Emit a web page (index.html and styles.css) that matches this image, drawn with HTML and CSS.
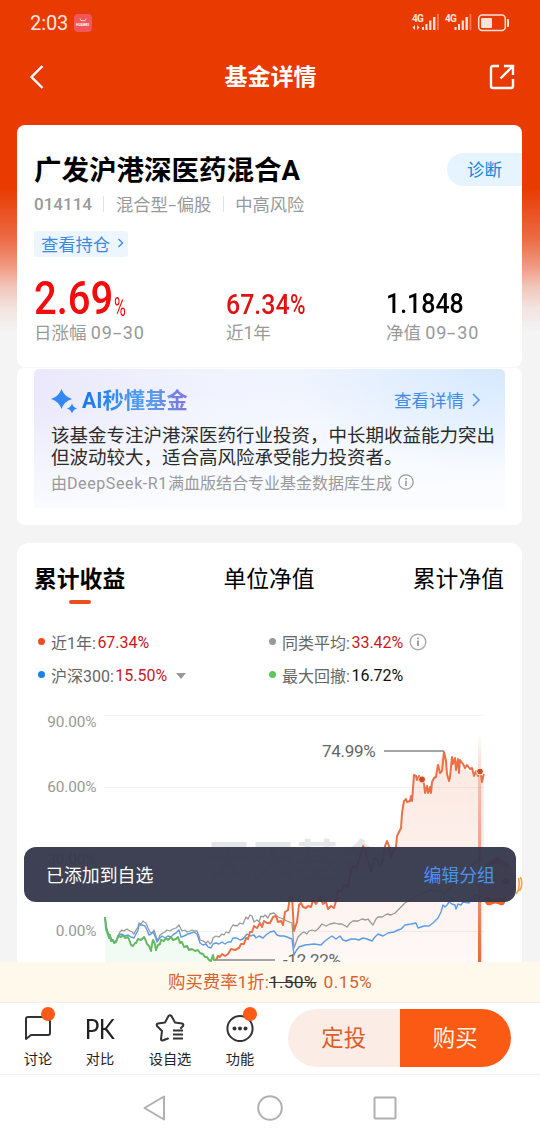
FILE: index.html
```html
<!DOCTYPE html>
<html lang="zh-CN">
<head>
    <meta charset="UTF-8">
    <title>基金详情</title>
    <link rel="stylesheet" href="styles.css">
</head>
<body>
<div class="page">
    <div class="status-bar">
        <span class="time">2:03</span>
        <span class="app-badge">
            <svg width="18" height="18" viewBox="0 0 18 18"><path d="M6 4.5a3 2.4 0 0 0 6 0" fill="none" stroke="#fbd0c8" stroke-width="1"/></svg>
            <b>HUAWEI</b>
        </span>
        <svg class="signals" width="100" height="20" viewBox="410 13 100 20">
            <g fill="#ffe3da">
                <text class="net" x="412" y="22">4G</text>
                <path d="M412.500 27.500l2.500-2.500v5zM419.500 27.500l-2.500-2.500v5z"/>
                <path d="M422 27h2v3h-2zM425.500 24h2v6h-2zM429.200 20.500h2.200v9.500h-2.200zM433 17h2.400v13H433z"/>
                <path d="M437 14h1.800v16H437z" opacity=".4"/>
                <text class="net" x="445" y="22">4G</text>
                <path d="M454.500 27h2v3h-2zM458 24h2v6h-2zM461.700 20.500h2.200v9.500h-2.200zM465.500 17h2.400v13h-2.400z"/>
                <path d="M469.500 14h1.800v16h-1.800z" opacity=".4"/>
                <rect x="481" y="18" width="11" height="10" rx="1"/>
                <path d="M507 19h1a1 1 0 0 1 1 1v6a1 1 0 0 1-1 1h-1z"/>
            </g>
            <rect x="478.700" y="15" width="26.600" height="15.500" rx="3.500" fill="none" stroke="#ffe3da" stroke-width="1.500"/>
        </svg>
    </div>
    <div class="nav-bar">
        <svg width="24" height="28" viewBox="0 0 24 28"><path d="M13.500 3L2.500 14l11 11" fill="none" stroke="#fff" stroke-width="2.400"/></svg>
        <h1>基金详情</h1>
        <svg width="26" height="26" viewBox="0 0 26 26" fill="none" stroke="#fff" stroke-width="2.400"><path d="M10 2H4Q2 2 2 4v18q0 2 2 2h18q2 0 2-2v-7M11.500 14.500L23 3M15 2h9v9"/></svg>
    </div>

    <div class="content">
        <div class="card fund">
            <div class="fund-title">
                <h2>广发沪港深医药混合A</h2>
                <a class="diagnose">诊断</a>
            </div>
            <div class="fund-meta"><b>014114</b><i></i><span>混合型<em>-</em>偏股</span><i></i><span>中高风险</span></div>
            <a class="holding">查看持仓
                <svg width="7" height="10" viewBox="0 0 7 10"><path d="M1.500 1l4 4-4 4" fill="none" stroke="#3f8ae0" stroke-width="1.300"/></svg>
            </a>
            <div class="stats">
                <div class="stat"><p class="value big"><span>2.69</span><small>%</small></p><p class="label">日涨幅 <span>09<em>-</em>30</span></p></div>
                <div class="stat"><p class="value red"><span>67.34</span><em>%</em></p><p class="label">近1年</p></div>
                <div class="stat"><p class="value"><span>1.1848</span></p><p class="label">净值 <span>09<em>-</em>30</span></p></div>
            </div>
        </div>

        <div class="card ai">
            <div class="ai-box">
                <div class="ai-head">
                    <svg width="27" height="27" viewBox="0 0 27 27" fill="#3388f5"><path d="M10.500 1Q13 8.500 21 11 13 13.500 10.500 21 8 13.500 0 11 8 8.500 10.500 1zM21 15.500q1.300 3.800 5 5-3.700 1.200-5 5-1.300-3.800-5-5 3.700-1.200 5-5z"/></svg>
                    <strong>AI秒懂基金</strong>
                    <a>查看详情</a>
                    <svg width="10" height="14" viewBox="0 0 10 14"><path d="M2 1l6 6-6 6" fill="none" stroke="#4d94ea" stroke-width="1.500"/></svg>
                </div>
                <p class="ai-text">该基金专注沪港深医药行业投资，中长期收益能力突出<br>但波动较大，适合高风险承受能力投资者。</p>
                <p class="ai-note"><span>由<b>DeepSeek-R1</b>满血版结合专业基金数据库生成</span>
                    <svg width="16" height="16" viewBox="0 0 16 16"><circle cx="8" cy="8" r="7.200" fill="none" stroke="#999" stroke-width="1.200"/><path d="M7.200 4h1.700v1.600H7.200zM7.200 6.800h1.600V12H7.200z" fill="#999"/></svg>
                </p>
            </div>
        </div>

        <div class="card trend">
            <div class="tabs"><span class="active">累计收益</span><span>单位净值</span><span>累计净值</span></div>
            <div class="legend">
                <div><i class="dot orange"></i>近1年:<b class="up">67.34%</b></div>
                <div><i class="dot grey"></i>同类平均:<b class="up">33.42%</b>
                    <svg class="info" width="18" height="18" viewBox="0 0 18 18"><circle cx="9" cy="9" r="7.800" fill="none" stroke="#aaa" stroke-width="1.400"/><path d="M8.100 4.500h1.800v1.800H8.100zM8.100 7.500h1.800V13H8.100z" fill="#999"/></svg>
                </div>
                <div><i class="dot blue"></i>沪深300:<b class="up">15.50%</b><i class="caret"></i></div>
                <div><i class="dot green"></i>最大回撤:<b>16.72%</b></div>
            </div>
            <svg class="chart" width="505" height="262" viewBox="17 700 505 262">
                <defs>
                    <linearGradient id="area" x1="0" y1="0" x2="0" y2="1"><stop offset="0" stop-color="#fce8e1"/><stop offset="1" stop-color="#fef8f6"/></linearGradient>
                    <linearGradient id="cursor" x1="0" y1="0" x2="0" y2="1"><stop offset="0" stop-color="#e57650" stop-opacity="0"/><stop offset=".2" stop-color="#e57650" stop-opacity=".35"/><stop offset=".75" stop-color="#e57650" stop-opacity=".85"/><stop offset="1" stop-color="#e46a41"/></linearGradient>
                </defs>
                <text class="watermark" x="207" y="877">天天基金</text>
                <!-- 收益区域 -->
                <path fill="url(#area)" d="M216 962L231 950 243 943 252 931 267 923 276 916 283 924 288 910 292 896 294 931 300 903 313 902 329 909 338 890 353 867 363 846 371 872 387 841 392 857 396 847 401 828 404 801 412 800 414 776 422 779 425 793 432 782 437 765 444 752 449 781 452 757 458 772 465 768 474 776 480 772 482 782 484 773V962z"/>
                <path fill="#effaf0" opacity=".8" d="M105 918L110 937 116 943 123 937 133 946 144 937 151 951 162 942 179 938 192 950 205 955 216 962H105z"/>
                <path stroke="#000" stroke-opacity=".05" d="M104 715.500h380M104 787.500h380M104 859.500h380M104 931.500h380"/>
                <g class="axis" text-anchor="end">
                    <text x="96.500" y="727">90.00%</text>
                    <text x="96.500" y="792">60.00%</text>
                    <text x="96.500" y="864">30.00%</text>
                    <text x="96.500" y="936">0.00%</text>
                </g>
                <g fill="none" stroke-linejoin="round">
                    <path stroke="#999" stroke-width="1.300" d="M105 918L107 930 110 936 113 941 116 942 118 936 120 932 122 930 124 931 127 929 130 931 132 932 134 934 136 930 138 927 139 923 141 924 143 921 144 922 146 923 148 928 150 932 152 933 154 930 155 933 157 940 159 938 160 935 163 933 165 932 167 930 170 931 173 929 176 928 179 925 182 931 185 930 187 932 190 931 192 930 195 931 197 931 199 936 200 940 203 941 206 943 208 941 210 944 212 942 213 938 216 936 219 937 222 934 224 935 226 932 229 933 231 928 233 925 237 926 240 923 243 924 246 917 248 919 250 915 252 916 254 922 257 920 259 922 261 916 263 917 265 915 268 918 270 914 274 913 278 917 283 919 287 921 292 923 294 948 298 937 302 933 304 932 307 934 309 931 312 930 315 931 318 929 322 924 326 926 330 924 335 923 338 924 342 924 347 927 350 923 353 921 358 921 362 919 366 920 368 919 371 923 373 925 376 919 378 917 382 917 387 914 391 915 395 913 400 908 405 903 415 897 430 890 445 893 459 878 472 866 480 857"/>
                    <path stroke="#5b9be8" stroke-width="1.400" d="M105 918L107 931 110 938 114 942 117 940 119 935 122 934 125 936 128 935 131 937 134 938 136 934 138 930 139 925 142 925 145 926 147 930 149 935 151 934 153 932 155 936 157 942 159 939 162 936 165 938 168 936 171 937 174 934 176 933 179 930 181 937 184 936 188 934 191 933 194 932 197 934 199 940 200 943 203 945 206 944 208 947 211 948 213 944 216 943 219 944 222 942 225 944 228 942 231 942 233 938 237 938 240 940 243 939 247 934 250 936 254 935 256 938 259 936 263 938 266 935 270 932 274 931 277 935 280 936 284 936 287 937 292 939 294 955 296 951 299 947 305 945 314 944 321 945 325 941 329 938 332 936 336 939 340 936 343 940 346 941 351 939 355 939 359 940 363 938 367 939 372 941 375 937 378 934 383 936 388 933 394 932 398 930 401 929 405 925 411 924 416 923 418 928 424 926 429 926 433 923 438 918 441 912 443 905 445 907 447 905 449 902 452 904 455 905 456 909 458 904 461 905 463 902 469 903 475 895 480 898"/>
                    <path stroke="#65b963" stroke-width="2" d="M105 917L106 929 107 932 109 938 110 935 111 941 113 940 114 943 116 942 118 936 121 937 123 935 125 938 128 937 130 942 131 945 133 946 135 943 136 943 138 939 141 940 144 937 146 941 147 944 149 946 151 951 152 944 153 940 155 944 156 950 158 945 160 944 161 940 164 941 166 938 168 940 171 937 173 940 176 939 178 937 180 943 182 942 184 947 187 946 189 950 192 949 195 951 198 950 200 953 203 954 205 957 207 957 209 960 211 961 213 955 214 960 216 960"/>
                    <path stroke="#ec7046" stroke-width="2" d="M216 960L218 956 220 957 222 954 225 956 228 954 231 949 235 950 239 948 241 944 244 944 246 938 248 939 250 932 252 932 254 926 257 928 260 923 262 927 264 921 267 923 270 923 273 917 276 916 278 922 281 921 283 925 285 912 288 910 290 897 292 896 294 931 297 922 299 905 301 903 303 907 306 908 308 906 311 907 313 900 316 904 320 897 323 904 326 902 328 909 331 906 334 908 336 901 338 890 342 891 345 885 348 888 351 869 354 866 357 868 360 856 363 846 365 849 367 858 369 864 371 872 374 859 377 858 380 867 383 859 385 846 387 841 389 846 391 858 394 850 396 847 397 836 399 832 401 828 402 813 404 801 406 799 407 802 410 801 411 796 412 801 413 788 414 775 416 776 417 780 419 776 422 779 424 784 425 793 427 786 428 793 430 787 431 793 432 782 434 778 436 777 438 765 440 773 442 771 444 752 446 761 447 774 449 781 450 777 452 757 453 764 455 758 456 770 458 759 459 773 460 760 463 764 465 768 467 765 470 769 472 768 474 776 476 771 478 776 480 772 481 775 482 782 483 777 484 774"/>
                    <path stroke="#888" stroke-width="1.700" d="M384 751h60M216 960h59"/>
                </g>
                <rect x="478" y="733" width="3.200" height="229" fill="url(#cursor)"/>
                <circle cx="422" cy="779.500" r="3.400" fill="#cf4b20" stroke="#fff" stroke-opacity=".7"/>
                <circle cx="480" cy="771.500" r="3.400" fill="#cf4b20" stroke="#fff"/>
                <g class="mark"><text x="322" y="757">74.99%</text><text x="283" y="965.500">-12.22%</text></g>
            </svg>
        </div>
    </div>

    <!-- 右侧吉祥物 -->
    <svg class="mascot" width="48" height="56" viewBox="0 0 48 56">
        <path d="M8 15q2-8 8-9 5-6 10 0 8 1 8 9z" fill="#e36a43"/>
        <circle cx="20" cy="29" r="19" fill="#f7cdb3"/>
        <circle cx="10" cy="27" r="3" fill="#2d5fb5"/><circle cx="30" cy="27" r="3" fill="#2d5fb5"/>
        <path d="M40.500 40q4-6 2-16M43.500 37q4-6 1-14" fill="none" stroke="#f3a344" stroke-width="1.600"/>
        <path d="M8 44h22q-1 9-6 7-5-3-9 0-6 2-7-7z" fill="#f26428"/>
    </svg>
    <div class="toast"><span>已添加到自选</span><a>编辑分组</a></div>

    <div class="fee">购买费率1折:<del>1.50%</del><span>0.15%</span></div>

    <div class="actions">
        <div class="action">
            <svg width="30" height="30" viewBox="0 0 30 30" fill="none" stroke="#333" stroke-width="2"><path d="M3 27V7q0-2 2-2h20q2 0 2 2v14q0 2-2 2H8z" stroke-linejoin="round"/></svg>
            <i class="badge"></i><span>讨论</span>
        </div>
        <div class="action"><b class="pk">PK</b><span>对比</span></div>
        <div class="action">
            <svg width="30" height="30" viewBox="0 0 30 30" fill="none" stroke="#333" stroke-width="2" stroke-linejoin="round" stroke-linecap="round"><path d="M13 27L7.500 29q-1.500 0-1.500-1.500L7 19.500l-5-5q-1-2 1-2.500l7-1 3.500-6.500q1.500-1.500 3 0L20 11l7 1q2 .5 1 2.500l-2 2" transform="translate(0 -.5)"/><path d="M18 18.500h10M18 22.500h10M18 26.500h10" stroke-linecap="butt"/></svg>
            <span>设自选</span>
        </div>
        <div class="action">
            <svg width="30" height="30" viewBox="0 0 30 30"><circle cx="15" cy="16.500" r="12.600" fill="none" stroke="#333" stroke-width="2"/><g fill="#333"><circle cx="9.500" cy="16.500" r="2"/><circle cx="15" cy="16.500" r="2"/><circle cx="20.500" cy="16.500" r="2"/></g></svg>
            <i class="badge"></i><span>功能</span>
        </div>
        <div class="buttons"><a class="plan">定投</a><a class="buy">购买</a></div>
    </div>

    <div class="system-nav">
        <svg width="26" height="26" viewBox="0 0 26 26"><path d="M22 1.500v23L2.500 13z"/></svg>
        <svg width="26" height="26" viewBox="0 0 26 26"><circle cx="13" cy="13" r="11.800"/></svg>
        <svg width="26" height="26" viewBox="0 0 26 26"><rect x="2.500" y="2.500" width="21" height="21" rx="1"/></svg>
    </div>
</div>
</body>
</html>
```

FILE: styles.css
```css
* {
    box-sizing: border-box;
}

body {
    margin: 0;
    font-family: Roboto, "Noto Sans CJK SC", sans-serif;
}

h1, h2, p {
    margin: 0;
}

i, em {
    font-style: normal;
}

svg {
    flex: none;
    display: block;
}

.page {
    position: relative;
    display: flex;
    flex-direction: column;
    width: 540px;
    height: 1140px;
    overflow: hidden;
    white-space: nowrap;
    background: linear-gradient(#e93a02 0, #e93a02 188px, #ec6a44 238px, #f0957c 264px, #f2c4b8 286px, #f3e3df 308px, #f4f4f4 332px);
}

/* 顶部 */
.status-bar {
    display: flex;
    align-items: center;
    height: 46px;
    padding: 0 30px;
    flex: none;
}

.time {
    width: 38px;
    font-size: 20px;
    letter-spacing: -0.1px;
    color: #ffe6dd;
}

.app-badge {
    position: relative;
    width: 18px;
    height: 18px;
    margin-left: 6px;
    border-radius: 4px;
    background: #f0565a;
}

.app-badge b {
    position: absolute;
    left: 2px;
    top: 8px;
    font-size: 3.5px;
    line-height: 6px;
    color: #fff;
}

.signals {
    margin-left: auto;
}

.net {
    font-size: 10px;
    font-weight: bold;
    letter-spacing: -0.8px;
}

.nav-bar {
    display: flex;
    align-items: center;
    justify-content: space-between;
    height: 62px;
    padding: 0 25px 0 29px;
    flex: none;
}

.nav-bar h1 {
    margin: 2px 0 0 -1px;
    color: #fff;
    font-size: 23px;
    line-height: 30px;
}

.content {
    flex: 1;
    min-height: 0;
    overflow: hidden;
    padding: 17px 18px 0 17px;
}

.card {
    border-radius: 8px;
    background: #fff;
}

/* 基金信息 */
.fund {
    height: 242px;
    padding: 26px 0 0 17px;
}

.fund-title {
    display: flex;
    align-items: center;
    justify-content: space-between;
    height: 36px;
}

.fund-title h2 {
    padding-bottom: 3px;
    font-size: 27.5px;
}

.diagnose {
    width: 75px;
    height: 33px;
    padding-left: 20px;
    border-radius: 17px 0 0 17px;
    background: #e6f4ff;
    color: #1585e0;
    font-size: 17.5px;
    line-height: 34px;
}

.fund-meta {
    display: flex;
    align-items: center;
    height: 22px;
    margin-top: 6px;
    font-size: 17.3px;
    color: #999;
}

.fund-meta span {
    margin-top: -2px;
}

.fund-meta b {
    font-weight: 500;
    font-size: 17px;
}

.fund-meta i {
    width: 1px;
    height: 16px;
    margin: 0 11.5px;
    background: #e2e2e2;
}

.fund-meta em, .label em {
    display: inline-block;
    margin: 0 2px;
    transform: scaleX(1.7);
}

.holding {
    display: flex;
    align-items: center;
    gap: 7px;
    width: 94px;
    height: 26px;
    margin: 16px 0 0;
    padding: 0 0 2px 7px;
    border-radius: 3px;
    background: #edf5ff;
    color: #3f8ae0;
    font-size: 17.3px;
}

.stats {
    display: grid;
    grid-template-columns: 192px 160px 1fr;
    align-items: end;
    margin-top: 16px;
}

.value {
    display: flex;
    height: 35px;
    font-size: 28px;
    font-weight: 500;
    line-height: 33px;
}

/* 数字用窄体 */
.value span {
    transform: scaleX(.89);
    transform-origin: 0 50%;
}

.value.red {
    color: #e01111;
}

.value em {
    margin-left: -7px;
    transform: scaleX(.75);
    transform-origin: 0 50%;
}

.value.big {
    height: 49px;
    font-size: 46px;
    line-height: 51px;
    color: #f50b0b;
}

.value.big span {
    transform: scaleX(.87);
}

.value small {
    margin: 9px 0 0 -11px;
    font-size: 26px;
    font-weight: 400;
    transform: scaleX(.62);
    transform-origin: 0 50%;
}

.label {
    font-size: 17.5px;
    line-height: 21px;
    color: #999;
}

.label span {
    font-size: 18px;
    letter-spacing: 0.9px;
}

/* AI 解读 */
.ai {
    height: 158px;
    margin: 0 0 18px;
    padding: 1px 17px 0;
    border-top: 1px solid #f7f7f7;
}

.ai-box {
    height: 139px;
    padding: 18px 17px 0;
    border-radius: 5px 5px 0 0;
    background: radial-gradient(ellipse 45% 75% at 100% 0, #d7e9ff 0, rgba(215, 233, 255, 0) 100%), linear-gradient(176deg, rgba(255, 255, 255, 0) 20%, #fafcff 85%), linear-gradient(100deg, #ebe8fb 0, #f1f4fe 40%, #edf5ff 100%);
}

.ai-head {
    display: flex;
    align-items: center;
    height: 28px;
}

.ai-head strong {
    margin: 0 auto 0 4px;
    font-size: 21.3px;
    line-height: 28px;
    background: linear-gradient(90deg, #1677e8, #55a0f3 60%, #8175dc);
    -webkit-background-clip: text;
    background-clip: text;
    color: transparent;
}

.ai-head a {
    margin-right: 7px;
    padding-bottom: 4px;
    font-size: 17.5px;
    color: #3e8ce8;
}

.ai-head svg:last-child {
    margin: 0 7px 2px 0;
}

.ai-text {
    margin-top: 10px;
    font-size: 18.5px;
    line-height: 22px;
    color: #2b2b2b;
}

.ai-note {
    display: flex;
    align-items: center;
    gap: 6px;
    height: 24px;
    margin-top: 1px;
    font-size: 16px;
    color: #999;
}

.ai-note b {
    font-weight: 400;
    letter-spacing: 0.6px;
}

/* 收益走势 */
.trend {
    height: 440px;
    border-radius: 12px;
}

.tabs {
    display: flex;
    justify-content: space-between;
    padding: 20px 18px 0 17px;
    font-size: 22.8px;
    line-height: 34px;
}

.tabs .active {
    position: relative;
    font-weight: bold;
}

.tabs .active::after {
    content: "";
    position: absolute;
    left: 35px;
    top: 37px;
    width: 22px;
    height: 4px;
    border-radius: 2px;
    background: #ea501c;
}

.legend {
    display: grid;
    grid-template-columns: 231px 1fr;
    grid-auto-rows: 33px;
    padding: 28px 0 0 21px;
    font-size: 16px;
    color: #666;
}

.legend div {
    display: flex;
    align-items: center;
}

.legend b {
    margin: 2px 0 0 1.5px;
    font-size: 16px;
    font-weight: 400;
    color: #111;
}

.legend .up {
    color: #c9171e;
}

.dot {
    width: 7px;
    height: 7px;
    margin-right: 6px;
    border-radius: 50%;
}

.orange { background: #e9501b; }
.grey { background: #999; }
.blue { background: #1684ea; }
.green { background: #5fc65d; }

.info {
    margin-left: 6px;
}

.caret {
    margin: 2px 0 0 9px;
    border: 5px solid transparent;
    border-top: 6px solid #999;
    border-bottom: 0;
}

.chart {
    margin-top: 9px;
}

.axis {
    font-size: 15.4px;
    letter-spacing: -0.1px;
    fill: #999;
}

.mark {
    font-size: 17px;
    letter-spacing: -0.3px;
    fill: #666;
}

.watermark {
    font-size: 44px;
    font-weight: bold;
    fill: #e6e6e6;
}

/* 浮层 */
.mascot {
    position: absolute;
    left: 476px;
    top: 854px;
}

.toast {
    position: absolute;
    left: 24px;
    top: 847px;
    display: flex;
    align-items: center;
    justify-content: space-between;
    width: 492px;
    height: 55px;
    padding: 0 21px 2px 22px;
    border-radius: 12px;
    background: rgba(54, 56, 76, .96);
    color: #fff;
    font-size: 17.9px;
}

.toast a {
    color: #4b92ed;
}

/* 底部 */
.fee {
    flex: none;
    height: 41px;
    padding-left: 168px;
    border-bottom: 1px solid #f0f0f0;
    background: #fef9eb;
    color: #d9622f;
    font-size: 17.4px;
    line-height: 41px;
}

.fee del {
    color: #333;
    letter-spacing: 0.2px;
}

.fee span {
    margin-left: 7px;
    letter-spacing: 0.4px;
}

.actions {
    display: flex;
    flex: none;
    height: 72px;
    padding: 6px 0 0 7px;
    border-bottom: 1px solid #f3f3f3;
    background: #fff;
}

.action {
    position: relative;
    display: flex;
    flex-direction: column;
    align-items: center;
    width: 62px;
    margin-right: 8px;
    padding-top: 3px;
    font-size: 14.2px;
    line-height: 20px;
    color: #222;
}

.action:first-child {
    margin-right: 0;
}

.action span {
    margin-top: 7px;
}

.pk {
    height: 30px;
    font-family: Lato, sans-serif;
    font-size: 27px;
    font-weight: 400;
    line-height: 34px;
    letter-spacing: -0.5px;
    transform: scaleX(.9);
}

.badge {
    position: absolute;
    left: 34px;
    top: -2px;
    width: 14px;
    height: 14px;
    border-radius: 50%;
    background: #fb5b16;
}

.buttons {
    display: flex;
    width: 223px;
    height: 58px;
    margin-left: 9px;
    border-radius: 29px;
    overflow: hidden;
    font-size: 22.4px;
    line-height: 58px;
    text-align: center;
}

.buttons a {
    flex: 1;
}

.plan {
    background: #fcece6;
    color: #dc5e2a;
}

.buy {
    background: #fb5a14;
    color: #fff3e4;
}

.system-nav {
    display: flex;
    align-items: center;
    justify-content: center;
    gap: 89px;
    flex: none;
    height: 65px;
    background: #fff;
}

.system-nav svg {
    fill: none;
    stroke: #b0b0b0;
    stroke-width: 2;
    stroke-linejoin: round;
}
```
